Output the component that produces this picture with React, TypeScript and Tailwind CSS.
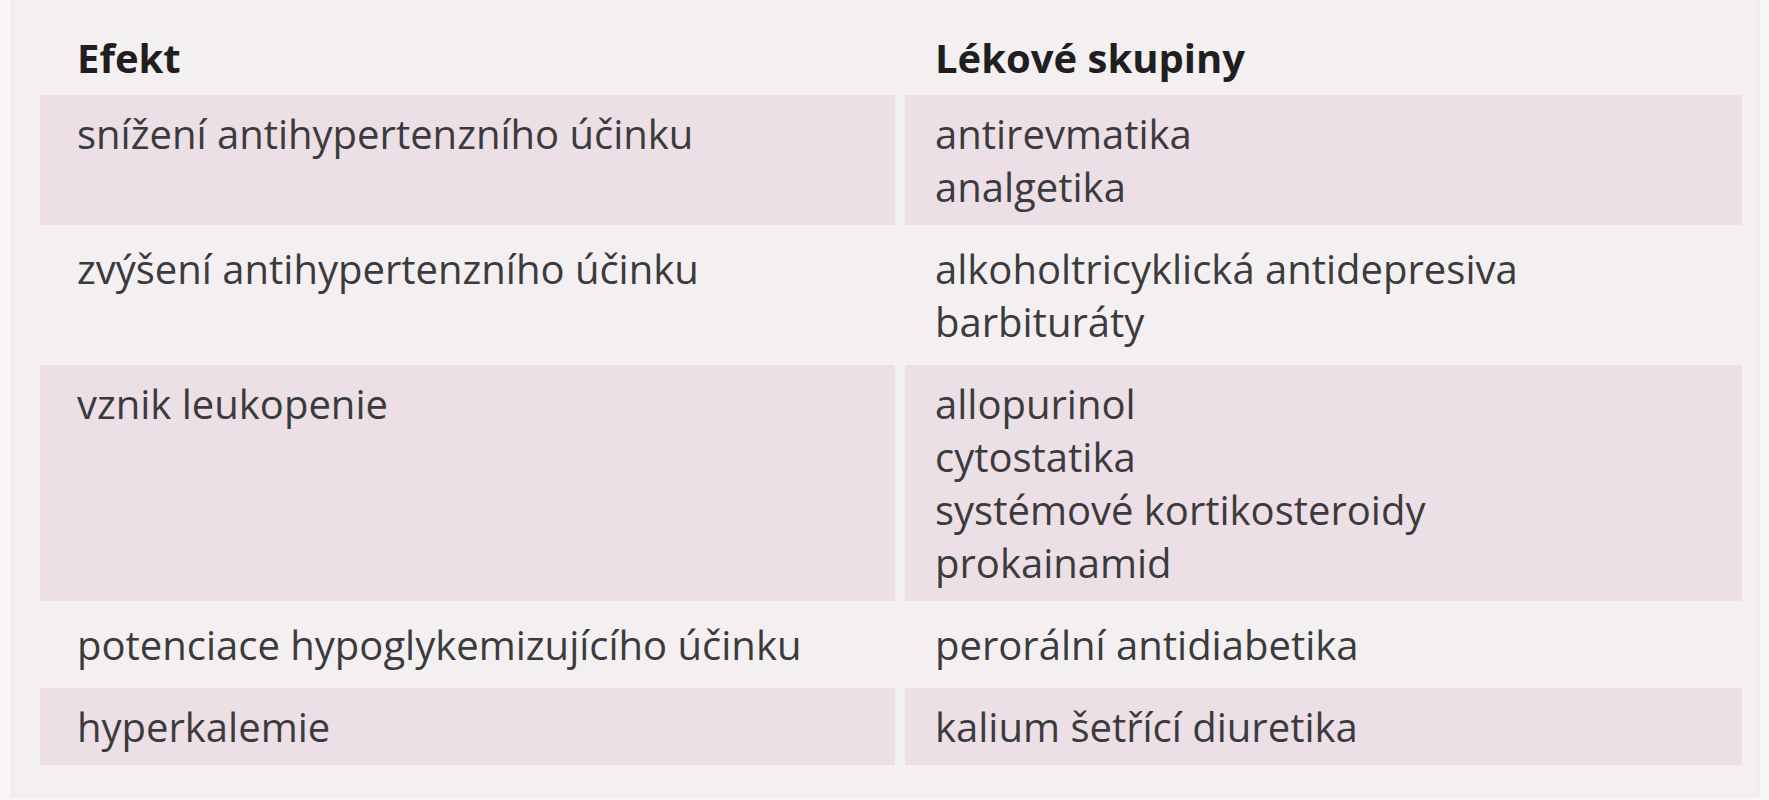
import React from 'react'

// rows of the interaction table: effect on the left, drug groups on the right
const ROWS: { effect: string; groups: string[] }[] = [
  { effect: 'snížení antihypertenzního účinku', groups: ['antirevmatika', 'analgetika'] },
  { effect: 'zvýšení antihypertenzního účinku', groups: ['alkoholtricyklická antidepresiva', 'barbituráty'] },
  {
    effect: 'vznik leukopenie',
    groups: ['allopurinol', 'cytostatika', 'systémové kortikosteroidy', 'prokainamid'],
  },
  { effect: 'potenciace hypoglykemizujícího účinku', groups: ['perorální antidiabetika'] },
  { effect: 'hyperkalemie', groups: ['kalium šetřící diuretika'] },
]

export default function App() {
  return (
    <div
      className="min-h-screen w-full bg-[#f8f5f6] text-[#3b3b3d]"
      style={{ fontFamily: '"Open Sans", "Noto Sans", sans-serif' }}
    >
      <div className="ml-[11px] mr-[9px] h-[797px] border-x-[3px] border-b-[3px] border-[#f7e8ed] bg-[#f4f0f1] pl-[26px] pr-[14px]">
        <div className="grid grid-cols-[855px_837px] gap-x-[10px] gap-y-[5px] text-[40px] leading-[53px]">
          <div className="h-[90px] pl-[37px] pt-[31px] font-bold text-[#1f1f22]">Efekt</div>
          <div className="h-[90px] pl-[30px] pt-[31px] font-bold text-[#1f1f22]">Lékové skupiny</div>

          {ROWS.map((row, i) => {
            const shade = i % 2 === 0 ? 'bg-[#ecdfe5]' : ''
            return (
              <React.Fragment key={row.effect}>
                <div className={`${shade} py-[12px] pl-[37px]`}>{row.effect}</div>
                <div className={`${shade} py-[12px] pl-[30px]`}>
                  {row.groups.map((g) => (
                    <div key={g}>{g}</div>
                  ))}
                </div>
              </React.Fragment>
            )
          })}
        </div>
      </div>
    </div>
  )
}
